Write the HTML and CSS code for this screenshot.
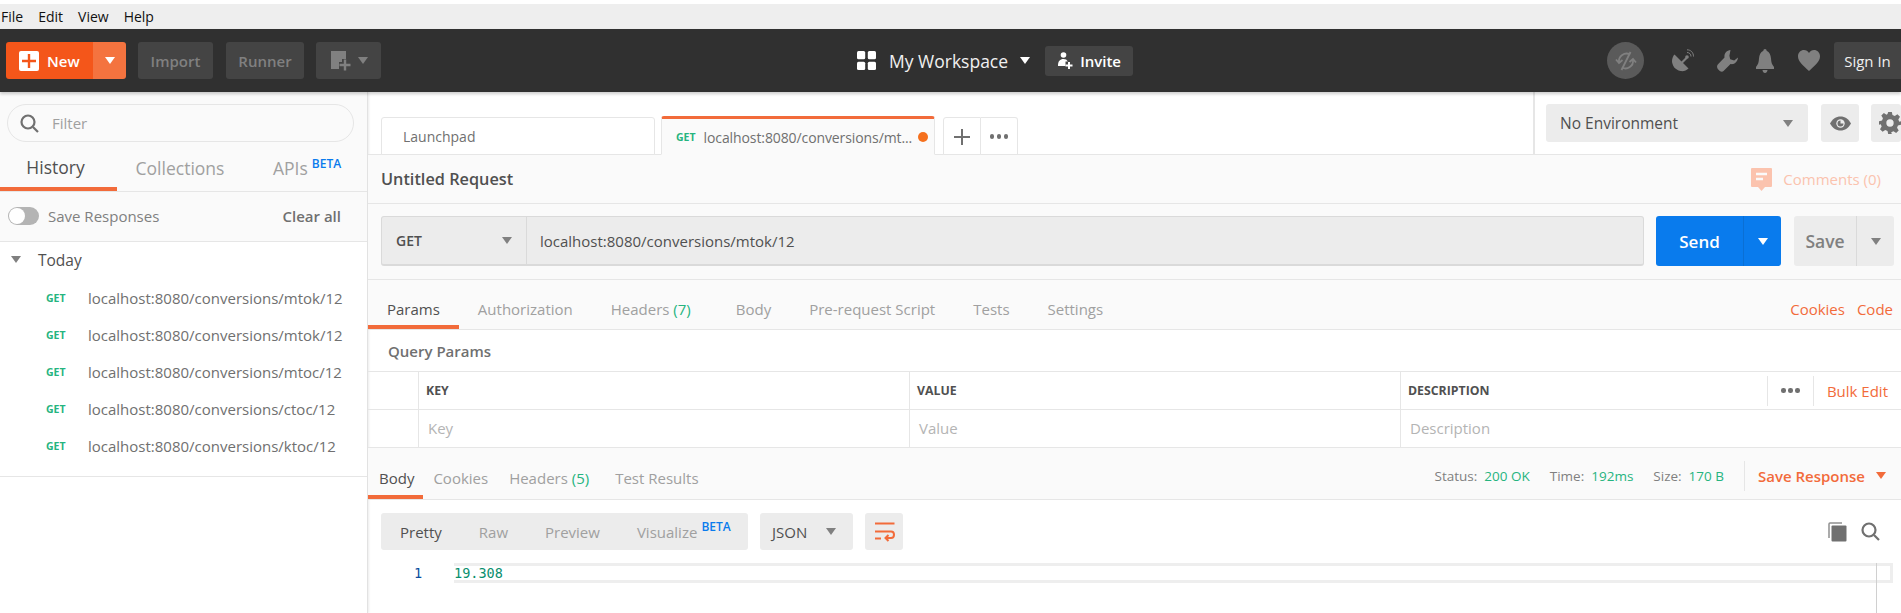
FILE: index.html
```html
<!DOCTYPE html>
<html>
	<head>
		<meta charset="utf-8">
		<title>Postman</title>
		<link rel="stylesheet" href="styles.css">
	</head>
	<body>
		<div id="container">
			<div class="menubar">
				<span>File</span><span>Edit</span><span>View</span><span>Help</span>
			</div>

			<!-- header -->
			<div class="header">
				<div class="btn-new">
					<span class="btn-new-main">
						<svg width="20" height="20" viewBox="0 0 20 20"><rect width="20" height="20" rx="2" fill="#fff"/><path d="M10 3v14M3 10h14" stroke="#f4561a" stroke-width="2.4"/></svg>
						New
					</span>
					<span class="btn-new-caret"><i class="caret caret-white"></i></span>
				</div>
				<span class="btn-dark btn-import">Import</span>
				<span class="btn-dark btn-runner">Runner</span>
				<span class="btn-dark btn-builder">
					<svg width="22" height="22" viewBox="0 0 22 22"><path d="M1 1h15v8h-4v3H9v7H1z" fill="#808080"/><path d="M15 9.500v11M9.500 15h11" stroke="#808080" stroke-width="2.400"/></svg>
					<i class="caret caret-grey"></i>
				</span>

				<div class="workspace">
					<svg width="19" height="19" viewBox="0 0 19 19" fill="#fff"><rect width="8.200" height="8.200" rx="1.500"/><rect x="10.800" width="8.200" height="8.200" rx="1.500"/><rect y="10.800" width="8.200" height="8.200" rx="1.500"/><rect x="10.800" y="10.800" width="8.200" height="8.200" rx="1.500"/></svg>
					<span class="workspace-name">My Workspace</span>
					<i class="caret caret-white"></i>
					<span class="btn-invite">
						<svg width="16" height="18" viewBox="0 0 16 18" fill="#fff"><circle cx="6.500" cy="3" r="2.800"/><path d="M1 14c0-5 2-7 5.500-7 2 0 3.500.8 4.300 2.500H8.500V14z"/><path d="M12 10v7M8.500 13.500h7" stroke="#fff" stroke-width="2"/></svg>
						Invite
					</span>
				</div>

				<div class="header-right">
					<span class="sync-circle">
						<svg width="24" height="24" viewBox="0 0 24 24" fill="none" stroke="#808080" stroke-width="1.800"><path d="M5 13a7.500 7.500 0 0 1 11-7.500"/><path d="M19 11a7.500 7.500 0 0 1-11 7.500"/><path d="M2 10.500l3 3.500 3.500-3M22 13.500L19 10l-3.500 3"/><path d="M16.500 3L7.500 21"/></svg>
					</span>
					<svg class="hd-sat" width="22" height="24" viewBox="0 0 22 24" fill="#808080"><path d="M2.500 5.500l14 14c-2 2-5 3-8 2.500C3 21 0 16 0 12c0-2.500 1-5 2.500-6.500z"/><path d="M9 13l5-5 1.500 1.500-5 5z"/><circle cx="15" cy="8" r="1.800"/><path d="M15 3.500c2.500 0 4 1.800 4 4M15 .8c4 0 6.500 3 6.500 6.700" fill="none" stroke="#808080" stroke-width="1"/></svg>
					<svg class="hd-wrench" width="21" height="22" viewBox="0 0 21 22" fill="#808080"><path d="M13.500 0c-4 .5-6.500 3.500-6 7.500L.8 14.500c-1 1-1 3 0 4.500l2 2c1.300 1 2.800 1 3.700 0l7-7c4 .8 7-2.200 7.500-6.500l-3.800 3-4-1.200-.8-3.500z"/></svg>
					<svg class="hd-bell" width="18" height="24" viewBox="0 0 18 24" fill="#808080"><path d="M9 0c1 0 1.600.7 1.600 1.800C13.500 3 14.700 6 15 9.500c.2 3.500.8 6 3 8.500v2H0v-2c2.200-2.500 2.800-5 3-8.500.3-3.500 1.500-6.500 4.400-7.700C7.400.7 8 0 9 0z"/><path d="M6.500 21h5c0 1.500-1 3-2.500 3s-2.500-1.500-2.500-3z"/></svg>
					<svg class="hd-heart" width="22" height="21" viewBox="0 0 22 21" fill="#808080"><path d="M11 21C5 15.500 0 11.500 0 6.300 0 2.500 2.800 0 6 0c2 0 3.900 1 5 3 1.100-2 3-3 5-3 3.200 0 6 2.500 6 6.300C22 11.500 17 15.500 11 21z"/></svg>
					<span class="btn-signin">Sign In</span>
				</div>
			</div>

			<div class="workbench">
				<!-- left side -->
				<div class="sidebar">
					<div class="side-top">
						<div class="filter">
							<svg width="19" height="19" viewBox="0 0 19 19" fill="none" stroke="#707070" stroke-width="2.200"><circle cx="8" cy="8" r="6.500"/><path d="M13 13l5 5"/></svg>
							<span>Filter</span>
						</div>
						<div class="side-tabs">
							<span class="side-tab side-tab-on">History</span>
							<span class="side-tab side-tab-mid">Collections</span>
							<span class="side-tab side-tab-apis"><span>APIs<sup class="beta">BETA</sup></span></span>
						</div>
						<div class="side-save">
							<span class="toggle"><i></i></span>
							<span class="side-save-label">Save Responses</span>
							<b>Clear all</b>
						</div>
					</div>
					<div class="today">
						<i class="caret caret-grey"></i>
						<span>Today</span>
					</div>
					<div class="history">
						<div class="history-row"><b>GET</b><span>localhost:8080/conversions/mtok/12</span></div>
						<div class="history-row"><b>GET</b><span>localhost:8080/conversions/mtok/12</span></div>
						<div class="history-row"><b>GET</b><span>localhost:8080/conversions/mtoc/12</span></div>
						<div class="history-row"><b>GET</b><span>localhost:8080/conversions/ctoc/12</span></div>
						<div class="history-row"><b>GET</b><span>localhost:8080/conversions/ktoc/12</span></div>
					</div>
				</div>

				<!-- request and response -->
				<div class="main">
					<div class="tabbar">
						<div class="tabs">
							<div class="tab tab-launch">Launchpad</div>
							<div class="tab tab-active"><b>GET</b><span>localhost:8080/conversions/mt...</span><i class="dot"></i></div>
							<div class="tab tab-icon tab-plus"><svg width="16" height="16" viewBox="0 0 16 16"><path d="M8 0v16M0 8h16" stroke="#707070" stroke-width="2"/></svg></div>
							<div class="tab tab-icon tab-more"><i class="dots"></i></div>
						</div>
						<div class="envbar">
							<div class="env-select"><span>No Environment</span><i class="caret caret-grey"></i></div>
							<span class="env-btn">
								<svg width="21" height="15" viewBox="0 0 21 15"><path d="M0 7.500C2.500 3 6 .5 10.500.5S18.500 3 21 7.500c-2.500 4.500-6 7-10.500 7S2.500 12 0 7.500z" fill="#707070"/><circle cx="10.500" cy="7.500" r="4.200" fill="#ececec"/><path d="M10.500 4.500a3 3 0 1 0 3 3h-3z" fill="#707070"/></svg>
							</span>
							<span class="env-btn env-gear">
								<svg width="22" height="24" viewBox="0 0 24 24" fill="#707070"><path d="M10 0h4l.7 3.300 2.500 1 2.900-1.800 2.800 2.800-1.800 2.900 1 2.500L24 10v4l-3.300.7-1 2.500 1.800 2.900-2.800 2.800-2.900-1.800-2.500 1L14 24h-4l-.7-3.300-2.500-1-2.900 1.800-2.800-2.800 1.800-2.900-1-2.500L0 14v-4l3.300-.7 1-2.500L2.500 3.900l2.800-2.800 2.900 1.800 1.100-.6zM12 8a4 4 0 1 0 0 8 4 4 0 0 0 0-8z"/></svg>
							</span>
						</div>
					</div>

					<div class="title-row">
						<span class="title">Untitled Request</span>
						<span class="comments">
							<svg width="21" height="23" viewBox="0 0 21 23"><path d="M1 0h19a1 1 0 0 1 1 1v17a1 1 0 0 1-1 1h-6l-3.500 4L7 19H1a1 1 0 0 1-1-1V1a1 1 0 0 1 1-1z" fill="#fbc3ae"/><path d="M5 6h11M5 11h7" stroke="#fafafa" stroke-width="2.400"/></svg>
							Comments (0)
						</span>
					</div>

					<div class="url-row">
						<div class="url-box">
							<div class="method"><span>GET</span><i class="caret caret-grey"></i></div>
							<div class="url">localhost:8080/conversions/mtok/12</div>
						</div>
						<div class="btn-send"><span class="send-main">Send</span><span class="send-caret"><i class="caret caret-white"></i></span></div>
						<div class="btn-save"><span class="save-main">Save</span><span class="save-caret"><i class="caret caret-grey"></i></span></div>
					</div>

					<div class="req-tabs">
						<span class="req-tab req-tab-on">Params</span>
						<span class="req-tab">Authorization</span>
						<span class="req-tab req-tab-headers">Headers <em>(7)</em></span>
						<span class="req-tab">Body</span>
						<span class="req-tab">Pre-request Script</span>
						<span class="req-tab">Tests</span>
						<span class="req-tab">Settings</span>
						<span class="req-links"><a>Cookies</a><a>Code</a></span>
					</div>

					<div class="query-title">Query Params</div>
					<div class="kv kv-head">
						<div class="kv-check"></div>
						<div class="kv-col">KEY</div>
						<div class="kv-col">VALUE</div>
						<div class="kv-col kv-desc">
							<span>DESCRIPTION</span>
							<span class="kv-more"><i class="dots"></i></span>
							<a>Bulk Edit</a>
						</div>
					</div>
					<div class="kv kv-body">
						<div class="kv-check"></div>
						<div class="kv-col">Key</div>
						<div class="kv-col">Value</div>
						<div class="kv-col kv-desc">Description</div>
					</div>

					<div class="res-tabs">
						<span class="res-tab res-tab-on">Body</span>
						<span class="res-tab">Cookies</span>
						<span class="res-tab res-tab-headers">Headers <em>(5)</em></span>
						<span class="res-tab">Test Results</span>
						<div class="res-meta">
							<span>Status:</span><em>200 OK</em>
							<span class="res-gap">Time:</span><em>192ms</em>
							<span class="res-gap">Size:</span><em>170 B</em>
							<a class="save-res">Save Response <i class="caret caret-orange"></i></a>
						</div>
					</div>

					<div class="res-tools">
						<div class="seg">
							<span class="seg-on">Pretty</span>
							<span>Raw</span>
							<span>Preview</span>
							<span>Visualize<sup class="beta">BETA</sup></span>
						</div>
						<div class="lang"><span>JSON</span><i class="caret caret-grey"></i></div>
						<div class="wrap-btn">
							<svg width="21" height="20" viewBox="0 0 21 20" fill="none" stroke="#f26b3a" stroke-width="2"><path d="M1 1.500h19.500M1 9.500h16c4 0 4 6.500 0 6.500h-5"/><path d="M14.500 13l-3 3 3 3M1 16.500h6"/></svg>
						</div>
						<div class="res-icons">
							<svg width="19" height="20" viewBox="0 0 19 20"><path d="M1 16V2a1 1 0 0 1 1-1h12" fill="none" stroke="#909090" stroke-width="1.500"/><rect x="3.500" y="3.500" width="15" height="16" rx="1" fill="#707070"/></svg>
							<svg width="19" height="19" viewBox="0 0 19 19" fill="none" stroke="#707070" stroke-width="2.200"><circle cx="8" cy="8" r="6.500"/><path d="M13 13l5 5"/></svg>
						</div>
					</div>

					<div class="editor">
						<span class="gutter">1</span>
						<div class="code-line">19.308</div>
						<i class="ruler"></i>
					</div>
				</div>
			</div>
		</div>
	</body>
</html>
```

FILE: styles.css
```css
html, body {
	height: 100%;
	width: 100%;
	margin: 0;
	padding: 0;
}
body {
	overflow: hidden;
	background-color: #fff;
	font-family: "Open Sans", "Noto Sans", sans-serif;
	font-size: 15px;
	color: #505050;
}
#container {
	width: 1901px;
	height: 613px;
	overflow: hidden;
	padding-top: 4px;
	box-sizing: border-box;
}
i, em { font-style: normal; }

.caret {
	display: inline-block;
	width: 0;
	height: 0;
	border-left: 5.500px solid transparent;
	border-right: 5.500px solid transparent;
	border-top: 7px solid #808080;
}
.caret-white { border-top-color: #fff; }
.caret-grey { border-top-color: #808080; }
.caret-orange { border-top-color: #f26b3a; }
.dots {
	display: inline-block;
	width: 4.500px;
	height: 4.500px;
	margin: 0 7px;
	border-radius: 50%;
	background: #707070;
	box-shadow: -7px 0 0 #707070, 7px 0 0 #707070;
}
.beta {
	font-size: 12px;
	font-weight: 600;
	color: #097bed;
	vertical-align: 7px;
	line-height: 0;
	margin-left: 4px;
}

/* menu */
.menubar {
	height: 25px;
	display: flex;
	align-items: center;
	gap: 15px;
	padding-left: 1px;
	background: #eee;
	font-size: 14px;
	color: #111;
}

/* header */
.header {
	position: relative;
	z-index: 2;
	height: 63px;
	display: flex;
	align-items: center;
	padding-left: 6px;
	background: #303030;
	box-shadow: 0 2px 3px rgba(0,0,0,0.2);
}
.btn-new {
	width: 120px;
	height: 37px;
	display: flex;
	border-radius: 3px;
	overflow: hidden;
	color: #fff;
	font-weight: 600;
}
.btn-new-main {
	flex: 1;
	display: flex;
	align-items: center;
	gap: 8px;
	padding-left: 13px;
	background: #f4561a;
}
.btn-new-caret {
	width: 33px;
	display: flex;
	align-items: center;
	justify-content: center;
	background: #f4733f;
}
.btn-dark {
	height: 37px;
	display: flex;
	align-items: center;
	justify-content: center;
	border-radius: 3px;
	background: #444;
	color: #808080;
	font-weight: 600;
}
.btn-import { width: 75px; margin-left: 12px; }
.btn-runner { width: 78px; margin-left: 13px; }
.btn-builder { width: 65px; margin-left: 12px; gap: 6px; }
.workspace {
	display: flex;
	align-items: center;
	margin-left: 476px;
	color: #f0f0f0;
}
.workspace-name {
	margin: 0 12px 0 13px;
	font-size: 17.500px;
}
.btn-invite {
	width: 88px;
	height: 30px;
	display: flex;
	align-items: center;
	justify-content: center;
	gap: 7px;
	margin-left: 15px;
	border-radius: 3px;
	background: #444;
	color: #fff;
	font-weight: 600;
}
.header-right {
	display: flex;
	align-items: center;
	margin-left: auto;
}
.sync-circle {
	width: 37px;
	height: 37px;
	display: flex;
	align-items: center;
	justify-content: center;
	border-radius: 50%;
	background: #5a5a5a;
}
.hd-sat { margin-left: 28px; }
.hd-wrench { margin-left: 23px; }
.hd-bell { margin-left: 18px; }
.hd-heart { margin-left: 24px; }
.btn-signin {
	width: 67px;
	height: 37px;
	display: flex;
	align-items: center;
	justify-content: center;
	margin-left: 14px;
	border-radius: 3px 0 0 3px;
	background: #444;
	color: #f0f0f0;
}

/* sidebar */
.workbench {
	display: flex;
	height: 521px;
}
.sidebar {
	width: 368px;
	flex: none;
	box-sizing: border-box;
	border-right: 1px solid #e2e2e2;
	box-shadow: 1px 0 2px rgba(0,0,0,0.08);
}
.side-top {
	height: 150px;
	box-sizing: border-box;
	padding-top: 12px;
	background: #fafafa;
	border-bottom: 1px solid #e6e6e6;
}
.filter {
	height: 38px;
	box-sizing: border-box;
	margin: 0 13px 0 7px;
	display: flex;
	align-items: center;
	gap: 13px;
	padding-left: 12px;
	border: 1px solid #e6e6e6;
	border-radius: 19px;
	color: #a0a0a0;
}
.side-tabs {
	height: 49px;
	display: flex;
	border-bottom: 1px solid #e6e6e6;
	font-size: 17.500px;
	color: #a0a0a0;
}
.side-tab {
	display: flex;
	align-items: center;
	justify-content: center;
	box-sizing: border-box;
	height: 49px;
	padding-top: 2px;
}
.side-tab-on {
	width: 117px;
	color: #505050;
	border-bottom: 4px solid #f26b3a;
	padding: 4px 6px 0 0;
}
.side-tab-mid { width: 126px; }
.side-tab-apis { margin-left: 30px; }
.side-save {
	height: 50px;
	box-sizing: border-box;
	padding: 0 26px 2px 8px;
	display: flex;
	align-items: center;
	color: #808080;
}
.side-save b {
	margin-left: auto;
	font-weight: 600;
	color: #707070;
}
.side-save-label { margin-left: 9px; }
.toggle {
	width: 31px;
	height: 18px;
	border-radius: 9px;
	background: #b4b4b4;
	display: flex;
	align-items: center;
	padding-left: 1px;
	box-sizing: border-box;
}
.toggle i {
	width: 16px;
	height: 16px;
	border-radius: 50%;
	background: #fff;
}
.today {
	height: 37px;
	box-sizing: border-box;
	padding: 0 0 2px 11px;
	display: flex;
	align-items: center;
	font-size: 15.500px;
	color: #505050;
}
.today span { margin-left: 17px; }
.history {
	padding-bottom: 12px;
	border-bottom: 1px solid #e6e6e6;
}
.history-row {
	height: 37px;
	display: flex;
	align-items: center;
	padding-left: 46px;
	color: #707070;
}
.history-row b {
	width: 42px;
	font-size: 10.500px;
	font-weight: 700;
	color: #26b47f;
}

/* main */
.main {
	flex: 1;
	min-width: 0;
}
.tabbar {
	height: 63px;
	box-sizing: border-box;
	display: flex;
	border-bottom: 1px solid #e6e6e6;
}
.tabs {
	flex: 1;
	display: flex;
	align-items: flex-end;
	padding-left: 13px;
}
.tab {
	height: 38px;
	box-sizing: border-box;
	display: flex;
	align-items: center;
	margin-bottom: -1px;
	padding-top: 1px;
	border: 1px solid #e6e6e6;
	border-bottom: 1px solid #e6e6e6;
	border-radius: 3px 3px 0 0;
	background: #fff;
	font-size: 14px;
	color: #707070;
}
.tab-launch {
	width: 274px;
	padding-left: 21px;
}
.tab-active {
	width: 274px;
	height: 39px;
	margin-left: 6px;
	padding-left: 14px;
	border-top: 3px solid #f26b3a;
	border-bottom: 1px solid #fafafa;
	background: #fafafa;
	white-space: nowrap;
}
.tab-active b {
	font-size: 10.500px;
	color: #26b47f;
	margin-right: 8px;
}
.tab-active span { letter-spacing: -0.1px; }
.dot {
	width: 10px;
	height: 10px;
	border-radius: 50%;
	margin-left: 6px;
	background: #f5701d;
}
.tab-icon { justify-content: center; }
.tab-plus { width: 38px; margin-left: 8px; border-radius: 3px 0 0 0; }
.tab-more { width: 37px; border-left: 0; border-radius: 0 3px 0 0; }
.envbar {
	width: 368px;
	box-sizing: border-box;
	display: flex;
	padding: 12px 0 0 11px;
	border-left: 2px solid #e6e6e6;
}
.env-select {
	width: 263px;
	height: 38px;
	box-sizing: border-box;
	display: flex;
	align-items: center;
	justify-content: space-between;
	padding: 0 15px 0 14px;
	border-radius: 3px;
	background: #ececec;
	font-size: 15.500px;
}
.env-btn {
	width: 38px;
	height: 38px;
	flex: none;
	display: flex;
	align-items: center;
	justify-content: center;
	margin-left: 13px;
	border-radius: 3px;
	background: #ececec;
}
.env-gear {
	margin-left: 12px;
	justify-content: flex-start;
	padding-left: 8px;
	box-sizing: border-box;
	width: 30px;
	overflow: hidden;
}
.env-gear svg { flex: none; }

.title-row {
	height: 49px;
	box-sizing: border-box;
	display: flex;
	align-items: center;
	justify-content: space-between;
	padding: 0 20px 0 13px;
	background: #fafafa;
	border-bottom: 1px solid #e6e6e6;
}
.title {
	font-size: 16.300px;
	font-weight: 600;
	color: #505050;
}
.comments {
	display: flex;
	align-items: center;
	gap: 11px;
	color: #fbc3ae;
}

.url-row {
	height: 76px;
	box-sizing: border-box;
	display: flex;
	padding: 12px 0 0 13px;
	background: #fafafa;
	border-bottom: 1px solid #e6e6e6;
}
.url-box {
	width: 1263px;
	height: 50px;
	box-sizing: border-box;
	display: flex;
	border: 1px solid #dadada;
	border-width: 1px 1px 2px 1px;
	border-radius: 3px;
	background: #ececec;
}
.method {
	width: 145px;
	box-sizing: border-box;
	display: flex;
	align-items: center;
	justify-content: space-between;
	padding: 0 14px;
	border-right: 1px solid #dadada;
	font-size: 14px;
	font-weight: 600;
}
.url {
	display: flex;
	align-items: center;
	padding-left: 13px;
}
.btn-send {
	width: 125px;
	height: 50px;
	display: flex;
	margin-left: 12px;
	border-radius: 3px;
	overflow: hidden;
	background: #097bed;
	color: #fff;
	font-size: 17px;
	font-weight: 600;
}
.send-main {
	width: 87px;
	display: flex;
	align-items: center;
	justify-content: center;
}
.send-caret {
	flex: 1;
	display: flex;
	align-items: center;
	justify-content: center;
	border-left: 1px solid #0a6fd4;
}
.btn-save {
	width: 100px;
	height: 50px;
	display: flex;
	margin-left: 13px;
	border-radius: 3px;
	background: #ececec;
	color: #808080;
	font-size: 17.500px;
	font-weight: 600;
}
.save-main {
	width: 62px;
	display: flex;
	align-items: center;
	justify-content: center;
}
.save-caret {
	flex: 1;
	display: flex;
	align-items: center;
	justify-content: center;
	border-left: 1px solid #dadada;
}

.req-tabs {
	height: 50px;
	box-sizing: border-box;
	display: flex;
	background: #fafafa;
	border-bottom: 1px solid #e6e6e6;
	color: #a0a0a0;
}
.req-tab {
	height: 49px;
	box-sizing: border-box;
	display: flex;
	align-items: center;
	padding: 8px 19px 0;
	white-space: pre;
}
.req-tab em { color: #26b47f; }
.req-tab-on {
	color: #505050;
	border-bottom: 4px solid #f26b3a;
	padding-top: 12px;
}
.req-tab-headers { margin-right: 7px; }
.req-links {
	margin-left: auto;
	display: flex;
	align-items: center;
	gap: 12px;
	padding: 8px 8px 0 0;
	color: #f26b3a;
}

.query-title {
	height: 41px;
	box-sizing: border-box;
	display: flex;
	align-items: center;
	padding-left: 20px;
	font-weight: 600;
	color: #707070;
}
.kv {
	display: flex;
	box-sizing: border-box;
	border-bottom: 1px solid #e6e6e6;
}
.kv-head {
	height: 39px;
	border-top: 1px solid #e6e6e6;
	font-size: 12.300px;
	font-weight: 700;
	color: #505050;
}
.kv-body {
	height: 38px;
	color: #b4b4b4;
}
.kv-body .kv-col { padding-bottom: 2px; }
.kv-check {
	width: 50px;
	flex: none;
}
.kv-col {
	width: 491px;
	flex: none;
	box-sizing: border-box;
	display: flex;
	align-items: center;
	padding-left: 9px;
	border-left: 1px solid #e6e6e6;
}
.kv-head .kv-col { padding-left: 7px; }
.kv-desc {
	flex: 1;
	width: auto;
}
.kv-more {
	margin-left: auto;
	height: 30px;
	width: 45px;
	display: flex;
	align-items: center;
	justify-content: center;
	border-left: 1px solid #e6e6e6;
	border-right: 1px solid #e6e6e6;
}
.kv-desc a {
	padding: 0 13px;
	font-size: 15px;
	font-weight: 400;
	color: #f26b3a;
}

.res-tabs {
	height: 52px;
	box-sizing: border-box;
	display: flex;
	background: #fafafa;
	border-bottom: 1px solid #e6e6e6;
	color: #a0a0a0;
}
.res-tab {
	height: 51px;
	box-sizing: border-box;
	display: flex;
	align-items: center;
	padding: 9px 10px 0;
	white-space: pre;
}
.res-tab em { color: #26b47f; }
.res-tab-on {
	color: #505050;
	padding: 13px 9px 0 11px;
	border-bottom: 4px solid #f26b3a;
}
.res-tab-headers { margin: 0 6px 0 1px; }
.res-meta {
	margin-left: auto;
	display: flex;
	align-items: center;
	height: 49px;
	padding-top: 3px;
	font-size: 13.500px;
	color: #808080;
}
.res-meta em {
	margin-left: 7px;
	color: #26b47f;
}
.res-gap { margin-left: 20px; }
.save-res {
	display: flex;
	align-items: center;
	gap: 11px;
	height: 30px;
	margin-left: 20px;
	padding: 0 15px 0 13px;
	border-left: 1px solid #e6e6e6;
	font-size: 15px;
	font-weight: 600;
	color: #f26b3a;
}

.res-tools {
	display: flex;
	align-items: center;
	height: 37px;
	margin-top: 13px;
	padding-left: 13px;
}
.seg {
	width: 367px;
	height: 37px;
	display: flex;
	align-items: center;
	gap: 37px;
	box-sizing: border-box;
	padding-left: 19px;
	border-radius: 3px;
	background: #ececec;
	color: #a0a0a0;
}
.seg-on { color: #505050; }
.lang {
	width: 93px;
	height: 37px;
	box-sizing: border-box;
	display: flex;
	align-items: center;
	justify-content: space-between;
	margin-left: 12px;
	padding: 0 17px 0 12px;
	border-radius: 3px;
	background: #ececec;
}
.wrap-btn {
	width: 38px;
	height: 37px;
	display: flex;
	align-items: center;
	justify-content: center;
	margin-left: 12px;
	border-radius: 3px;
	background: #ececec;
}
.res-icons {
	margin-left: auto;
	display: flex;
	align-items: center;
	gap: 14px;
	padding-right: 21px;
}

.editor {
	position: relative;
	display: flex;
	margin-top: 13px;
	padding-left: 46px;
	font-family: "DejaVu Sans Mono", monospace;
	font-size: 13.500px;
}
.gutter {
	width: 40px;
	line-height: 20px;
	color: #0a4d9e;
}
.code-line {
	width: 1439px;
	height: 20px;
	box-sizing: border-box;
	line-height: 14px;
	border: 3px solid #eee;
	border-left: 0;
	color: #0a8f6e;
}
.ruler {
	position: absolute;
	left: 1508px;
	top: 0;
	width: 1px;
	height: 50px;
	background: #d0d0d0;
}
```
